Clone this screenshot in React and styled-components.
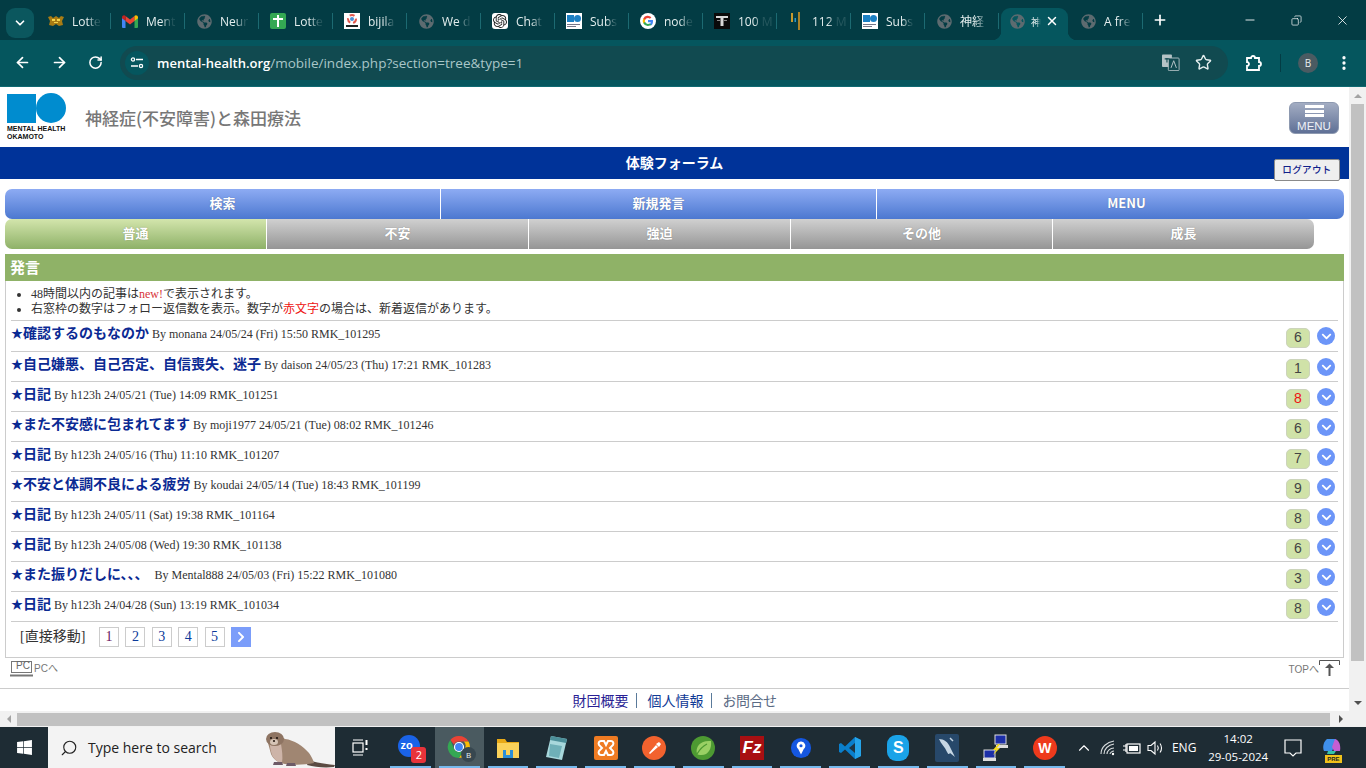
import React from "react";
import styled, { createGlobalStyle } from "styled-components";
import {
  ArrowLeft,
  ArrowRight,
  RotateCw,
  Star,
  Plus,
  X,
  Minus,
  ChevronDown,
  ChevronUp,
  Search,
  EllipsisVertical,
  Copy,
} from "lucide-react";
import { FaGlobeAmericas, FaWindows, FaChevronRight, FaChevronDown } from "react-icons/fa";
import { SiOpenai } from "react-icons/si";

const JP = `"Liberation Serif", "Noto Sans CJK JP", serif`;
const UI = `"Open Sans", "Noto Sans CJK JP", sans-serif`;

const GlobalStyle = createGlobalStyle`
  html, body {
    margin: 0;
    height: 100%;
    overflow: hidden;
    background: #fff;
  }
`;

const posts = [
  { title: "確認するのもなのか", meta: "By monana 24/05/24 (Fri) 15:50 RMK_101295", count: 6 },
  { title: "自己嫌悪、自己否定、自信喪失、迷子", meta: "By daison 24/05/23 (Thu) 17:21 RMK_101283", count: 1 },
  { title: "日記", meta: "By h123h 24/05/21 (Tue) 14:09 RMK_101251", count: 8, fresh: true },
  { title: "また不安感に包まれてます", meta: "By moji1977 24/05/21 (Tue) 08:02 RMK_101246", count: 6 },
  { title: "日記", meta: "By h123h 24/05/16 (Thu) 11:10 RMK_101207", count: 7 },
  { title: "不安と体調不良による疲労", meta: "By koudai 24/05/14 (Tue) 18:43 RMK_101199", count: 9 },
  { title: "日記", meta: "By h123h 24/05/11 (Sat) 19:38 RMK_101164", count: 8 },
  { title: "日記", meta: "By h123h 24/05/08 (Wed) 19:30 RMK_101138", count: 6 },
  { title: "また振りだしに、、、", meta: "By Mental888 24/05/03 (Fri) 15:22 RMK_101080", count: 3, gap: true },
  { title: "日記", meta: "By h123h 24/04/28 (Sun) 13:19 RMK_101034", count: 8 },
];

const GmailIcon = () => (
  <svg width="16" height="13" viewBox="0 0 16 13">
    <path d="M0 2v10a1 1 0 0 0 1 1h2.500V5.500z" fill="#4285f4" />
    <path d="M16 2v10a1 1 0 0 1-1 1h-2.500V5.500z" fill="#34a853" />
    <path d="M3.500 6V1L8 4.600 12.500 1v5L8 9.500z" fill="#ea4335" />
    <path d="M0 2.500C0 .5 2.300-.5 3.500 1v5L0 3.300z" fill="#c5221f" />
    <path d="M16 2.500C16 .5 13.700-.5 12.500 1v5L16 3.300z" fill="#fbbc04" />
  </svg>
);

const GoldIcon = () => (
  <svg width="16" height="12" viewBox="0 0 16 12">
    <path d="M0 2l3-1 2 2 3-2 3 2 2-2 3 1-2 4 1 4-4 1-3-2-3 2-4-1 1-4z" fill="#a97c14" />
    <path d="M4 4h3v2H4zM9 4h3v2H9zM6 7h4v1H6z" fill="#f5d44c" />
  </svg>
);

const CrossIcon = () => (
  <svg width="16" height="16" viewBox="0 0 16 16">
    <rect width="16" height="16" rx="2" fill="#34a853" />
    <path d="M7 2h2v3h4v2H9v7H7V7H3V5h4z" fill="#fff" />
  </svg>
);

const BijliIcon = () => (
  <svg width="16" height="16" viewBox="0 0 16 16">
    <rect width="16" height="16" fill="#fff" />
    <circle cx="8" cy="6" r="4" fill="none" stroke="#e2574c" strokeWidth="2" strokeDasharray="5 3" />
    <circle cx="8" cy="6" r="2" fill="#4a90d9" />
    <rect x="2" y="12" width="12" height="2" fill="#222" />
  </svg>
);

const MiniLogoIcon = () => (
  <svg width="16" height="16" viewBox="0 0 16 16">
    <rect width="16" height="16" fill="#fff" />
    <rect x="1" y="2" width="7" height="7" fill="#1b80c4" />
    <circle cx="11.500" cy="5.500" r="3.500" fill="#1b80c4" />
    <rect x="1" y="11" width="13" height="1" fill="#778" />
    <rect x="1" y="13" width="9" height="1" fill="#778" />
  </svg>
);

const GoogleIcon = () => (
  <svg width="16" height="16" viewBox="0 0 16 16">
    <circle cx="8" cy="8" r="8" fill="#fff" />
    <path d="M13 8.200c0-.4 0-.8-.1-1.200H8v2.200h2.800a2.500 2.500 0 0 1-1 1.600v1.400h1.700c1-.9 1.500-2.300 1.500-4z" fill="#4285f4" />
    <path d="M8 13c1.400 0 2.500-.5 3.400-1.200l-1.600-1.400c-.5.300-1.100.5-1.800.5-1.300 0-2.500-.9-2.900-2.100H3.300v1.400A5 5 0 0 0 8 13z" fill="#34a853" />
    <path d="M5.100 8.800a3 3 0 0 1 0-1.900V5.500H3.300a5 5 0 0 0 0 4.700z" fill="#fbbc04" />
    <path d="M8 5c.8 0 1.400.3 1.900.8l1.500-1.500A5 5 0 0 0 3.300 5.500l1.800 1.400C5.500 5.800 6.700 5 8 5z" fill="#ea4335" />
  </svg>
);

const BlackTIcon = () => (
  <svg width="16" height="16" viewBox="0 0 16 16">
    <rect width="16" height="16" fill="#0a0a0a" />
    <path d="M2 3h12v2H9.500v8h-3V5H2z" fill="#d8d8d8" />
    <path d="M3 7h3v1H3zM10 7h3v1h-3z" fill="#888" />
  </svg>
);

const BarsIcon = () => (
  <svg width="16" height="18" viewBox="0 0 16 18">
    <rect x="3" y="1" width="2" height="9" fill="#c79a2d" />
    <rect x="10" y="0" width="2" height="18" fill="#a9822a" />
    <rect x="6.500" y="6" width="1.500" height="4" fill="#2b98c9" />
  </svg>
);

const ChatIcon = () => (
  <WhiteTile>
    <SiOpenai size={14} color="#222" />
  </WhiteTile>
);

const globe = <FaGlobeAmericas size={15} color="#5d6b70" />;

const tabs = [
  { icon: <GoldIcon />, label: "Lotte" },
  { icon: <GmailIcon />, label: "Ment" },
  { icon: globe, label: "Neur" },
  { icon: <CrossIcon />, label: "Lotte" },
  { icon: <BijliIcon />, label: "bijila" },
  { icon: globe, label: "We d" },
  { icon: <ChatIcon />, label: "Chat" },
  { icon: <MiniLogoIcon />, label: "Subs" },
  { icon: <GoogleIcon />, label: "node" },
  { icon: <BlackTIcon />, label: "100 M" },
  { icon: <BarsIcon />, label: "112 M" },
  { icon: <MiniLogoIcon />, label: "Subs" },
  { icon: globe, label: "神経" },
  { icon: globe, label: "神", active: true },
  { icon: globe, label: "A fre" },
];

const Otter = () => (
  <svg width="70" height="37" viewBox="0 0 70 37">
    <path d="M44 29c8 3 17 4 26 5l-1 2c-10 1-19 0-27-2z" fill="#5b4a42" />
    <path d="M3 12C6 5 14 3 20 8c9 1 18 7 24 14 2 3 4 6 5 10-9 2-20 2-29 1-7-1-12-5-14-10-1-4-2-7-3-11z" fill="#a08672" />
    <path d="M5 14c3 1 8 1 11-1 1 6 2 13 1 19-5-1-8-4-10-8-1-3-2-7-2-10z" fill="#cdb4a8" />
    <ellipse cx="10" cy="8" rx="9" ry="7" fill="#8e7462" />
    <ellipse cx="9" cy="11" rx="4" ry="3" fill="#d6c4b6" />
    <circle cx="6" cy="7" r="1.100" fill="#1d1410" />
    <circle cx="12" cy="7" r="1.100" fill="#1d1410" />
    <circle cx="9" cy="10" r="1.100" fill="#2a1c16" />
    <path d="M9 31h8l1 3H8zM22 32h8l1 3h-10z" fill="#6d5a66" />
  </svg>
);

const ZoomApp = () => (
  <AppStack>
    <svg width="24" height="24" viewBox="0 0 24 24">
      <circle cx="11" cy="11" r="11" fill="#1a63e8" />
    </svg>
    <ZoomLabel>zo</ZoomLabel>
    <CountBadge>2</CountBadge>
  </AppStack>
);

const ChromeApp = () => (
  <AppStack>
    <svg width="24" height="24" viewBox="0 0 24 24">
      <path d="M12 1a11 11 0 0 1 9.500 5.500H12a5.500 5.500 0 0 0-5 3L3.300 5A11 11 0 0 1 12 1z" fill="#ea4335" />
      <path d="M21.500 6.500A11 11 0 0 1 12 23l4.700-8.200a5.500 5.500 0 0 0 .1-8.300z" fill="#fbbc04" />
      <path d="M3.300 5L7.500 14.700a5.500 5.500 0 0 0 9.200.1L12 23A11 11 0 0 1 3.300 5z" fill="#34a853" />
      <circle cx="12" cy="12" r="4.500" fill="#4285f4" stroke="#fff" strokeWidth="1.200" />
    </svg>
    <ChromeBadge>B</ChromeBadge>
  </AppStack>
);

const FolderApp = () => (
  <svg width="24" height="22" viewBox="0 0 24 22">
    <path d="M1 2h8l2 3h12v15H1z" fill="#e8a917" />
    <rect x="1" y="6" width="22" height="15" fill="#fbd25a" />
    <rect x="7" y="13" width="10" height="8" fill="#2b8fd8" />
    <rect x="10" y="13" width="4" height="5" fill="#fbd25a" />
  </svg>
);

const NotepadApp = () => (
  <svg width="26" height="26" viewBox="0 0 26 26">
    <path d="M7 1l16 3-5 21-16-3z" fill="#a8d8dc" />
    <path d="M7 1l16 3-1 4L6 5z" fill="#4c8f99" />
    <path d="M6 9l12 2-3 12-10-2z" fill="#6fb0b8" />
  </svg>
);

const XamppApp = () => (
  <svg width="24" height="24" viewBox="0 0 24 24">
    <rect width="24" height="24" rx="2" fill="#ef7b22" />
    <path d="M7 5h3l2 4 2-4h3c2 0 3 2 2 4l-3 3 3 3c1 2 0 4-2 4h-3l-2-4-2 4H7c-2 0-3-2-2-4l3-3-3-3C4 7 5 5 7 5z" fill="none" stroke="#fff" strokeWidth="2" />
  </svg>
);

const PostmanApp = () => (
  <svg width="24" height="24" viewBox="0 0 24 24">
    <circle cx="12" cy="12" r="12" fill="#f2622e" />
    <path d="M7 17l7-8 2 2-8 7zM14 8l3-2 2 2-2 3z" fill="#fff" />
  </svg>
);

const SpringApp = () => (
  <svg width="24" height="24" viewBox="0 0 24 24">
    <circle cx="12" cy="12" r="12" fill="#4d9a32" />
    <path d="M6 18C4 10 10 4 20 5c1 8-3 15-11 14-1 0-2-.3-3-1z" fill="#9ad064" />
    <path d="M6 18c3-5 6-8 10-10" fill="none" stroke="#4d9a32" strokeWidth="1.300" />
  </svg>
);

const FileZillaApp = () => <FzTile>Fz</FzTile>;

const PinApp = () => (
  <svg width="22" height="24" viewBox="0 0 24 24">
    <circle cx="12" cy="12" r="11" fill="#1557e0" />
    <path d="M12 5a4.500 4.500 0 0 1 3 8l-3 6-3-6a4.500 4.500 0 0 1 3-8z" fill="#fff" />
    <circle cx="12" cy="9.500" r="1.700" fill="#1557e0" />
  </svg>
);

const VsCodeApp = () => (
  <svg width="24" height="24" viewBox="0 0 24 24">
    <path d="M17 1l6 3v16l-6 3L7 13.500 3 17l-2-1V8l2-1 4 3.500z" fill="#0a7fcc" />
    <path d="M17 1l6 3v16l-6 3z" fill="#25a4ea" />
    <path d="M17 7l-6 5 6 5z" fill="#1f2d35" opacity="0.9" />
  </svg>
);

const SkypeApp = () => <SkypeTile>S</SkypeTile>;

const MysqlApp = () => (
  <MysqlTile>
    <svg width="20" height="24" viewBox="0 0 20 24">
      <path d="M2 3c5 0 9 3 11 8l5 10-5-4c-1 2-2 1-3-1C8 11 4 8 2 3z" fill="#c6d6e4" />
      <path d="M13 2l3 3" stroke="#c6d6e4" strokeWidth="1.500" />
    </svg>
  </MysqlTile>
);

const NetworkApp = () => (
  <svg width="26" height="28" viewBox="0 0 26 28">
    <rect x="12" y="1" width="11" height="9" fill="#1c2fa8" stroke="#ddd" />
    <rect x="13" y="11" width="12" height="3" fill="#ddd" />
    <rect x="1" y="16" width="11" height="8" fill="#1c2fa8" stroke="#ddd" />
    <rect x="0" y="24" width="13" height="3" fill="#ddd" />
    <path d="M15 10l-5 6h3l-3 5 7-7h-3l3-4z" fill="#f3d920" />
  </svg>
);

const WpsApp = () => <WpsTile>W</WpsTile>;

const apps = [
  { id: "zoom", node: <ZoomApp /> },
  { id: "chrome", node: <ChromeApp />, active: true },
  { id: "folder", node: <FolderApp /> },
  { id: "notepad", node: <NotepadApp /> },
  { id: "xampp", node: <XamppApp /> },
  { id: "postman", node: <PostmanApp /> },
  { id: "spring", node: <SpringApp /> },
  { id: "filezilla", node: <FileZillaApp /> },
  { id: "pin", node: <PinApp /> },
  { id: "vscode", node: <VsCodeApp /> },
  { id: "skype", node: <SkypeApp /> },
  { id: "mysql", node: <MysqlApp /> },
  { id: "network", node: <NetworkApp /> },
  { id: "wps", node: <WpsApp /> },
];

const App = () => (
  <Window>
    <GlobalStyle />
    <TabStrip>
      <TabSearch>
        <ChevronDown size={14} strokeWidth={3} color="#fff" />
      </TabSearch>
      {tabs.map((tab, i) => (
        <Tab key={i} $active={tab.active}>
          <TabIcon>{tab.icon}</TabIcon>
          <TabLabel $active={tab.active}>{tab.label}</TabLabel>
          {tab.active && <X size={14} strokeWidth={2.5} color="#fff" />}
        </Tab>
      ))}
      <NewTab>
        <Plus size={16} strokeWidth={2.5} color="#fff" />
      </NewTab>
      <WindowControls>
        <WindowButton>
          <Minus size={14} strokeWidth={1.5} color="#fff" />
        </WindowButton>
        <WindowButton>
          <Copy size={11} strokeWidth={1.5} color="#fff" style={{ transform: "scaleX(-1)" }} />
        </WindowButton>
        <WindowButton>
          <X size={15} strokeWidth={1.3} color="#fff" />
        </WindowButton>
      </WindowControls>
    </TabStrip>

    <Toolbar>
      <NavIcons>
        <ArrowLeft size={17} strokeWidth={2.4} color="#fff" />
        <ArrowRight size={17} strokeWidth={2.4} color="#fff" />
        <RotateCw size={15} strokeWidth={2.4} color="#fff" />
      </NavIcons>
      <AddressBar>
        <TuneBadge>
          <svg width="14" height="12" viewBox="0 0 14 12" fill="none" stroke="#fff" strokeWidth="1.300">
            <circle cx="3" cy="2.500" r="1.600" />
            <path d="M6 2.500h7M1 9h7" />
            <circle cx="11" cy="9" r="1.600" />
          </svg>
        </TuneBadge>
        <Url>
          <strong>mental-health.org</strong>/mobile/index.php?section=tree&amp;type=1
        </Url>
        <AddressActions>
          <svg width="18" height="17" viewBox="0 0 20 18">
            <rect x="0" y="0" width="11" height="14" rx="1" fill="#b5c3c6" />
            <rect x="7" y="4" width="12" height="14" rx="1" fill="#114a50" stroke="#b5c3c6" />
            <path d="M3 5h5M5.500 4v5" stroke="#114a50" strokeWidth="1.200" />
            <path d="M10 15l3-8 3 8" stroke="#b5c3c6" strokeWidth="1.100" fill="none" />
          </svg>
          <Star size={17} strokeWidth={2} color="#e4eeee" />
        </AddressActions>
      </AddressBar>
      <ExtensionSlot>
        <svg width="18" height="18" viewBox="0 0 18 18" fill="none" stroke="#fff" strokeWidth="1.800">
          <path d="M2 4h4a2 2 0 0 1 4 0h4v4a2 2 0 0 1 0 4v4H2v-4a2 2 0 0 0 0-4z" />
        </svg>
      </ExtensionSlot>
      <ToolbarDivider />
      <Avatar>B</Avatar>
      <Kebab>
        <EllipsisVertical size={18} strokeWidth={2.4} color="#fff" />
      </Kebab>
    </Toolbar>

    <Viewport>
      <ViewRow>
        <Page>
          <Header>
            <Brand>
              <LogoMarks>
                <LogoSquare />
                <LogoCircle />
              </LogoMarks>
              <LogoText>MENTAL HEALTH</LogoText>
              <LogoText>OKAMOTO</LogoText>
            </Brand>
            <SiteTitle>神経症(不安障害)と森田療法</SiteTitle>
            <MenuButton>
              <MenuBar />
              <MenuBar />
              <MenuBar />
              <MenuCaption>MENU</MenuCaption>
            </MenuButton>
          </Header>

          <BlueBar>
            体験フォーラム
            <Logout>ログアウト</Logout>
          </BlueBar>

          <NavBlock>
            <NavRow>
              <NavCell $tone="blue" $w={436}>検索</NavCell>
              <NavCell $tone="blue" $w={436}>新規発言</NavCell>
              <NavCell $tone="blue" $w={499}>MENU</NavCell>
            </NavRow>
            <NavRow $short>
              <NavCell $tone="green" $w={262}>普通</NavCell>
              <NavCell $tone="gray" $w={262}>不安</NavCell>
              <NavCell $tone="gray" $w={262}>強迫</NavCell>
              <NavCell $tone="gray" $w={262}>その他</NavCell>
              <NavCell $tone="gray" $w={261}>成長</NavCell>
            </NavRow>
          </NavBlock>

          <SectionHead>発言</SectionHead>
          <Panel>
            <Notes>
              <li>
                48時間以内の記事は<NewMark>new!</NewMark>で表示されます。
              </li>
              <li>
                右窓枠の数字はフォロー返信数を表示。数字が<RedMark>赤文字</RedMark>の場合は、新着返信があります。
              </li>
            </Notes>
            {posts.map((post, i) => (
              <PostRow key={i} $first={i === 0}>
                <PostText>
                  <PostTitle>
                    <PostStar>★</PostStar>
                    {post.title}
                  </PostTitle>
                  <PostMeta $gap={post.gap}>{post.meta}</PostMeta>
                </PostText>
                <Count $fresh={post.fresh}>{post.count}</Count>
                <Expand>
                  <FaChevronDown size={11} color="#fff" />
                </Expand>
              </PostRow>
            ))}
            <Pager>
              <PagerLabel>[直接移動]</PagerLabel>
              <PageBox $visited>1</PageBox>
              <PageBox>2</PageBox>
              <PageBox>3</PageBox>
              <PageBox>4</PageBox>
              <PageBox>5</PageBox>
              <PageNext>
                <FaChevronRight size={12} color="#fff" />
              </PageNext>
            </Pager>
          </Panel>

          <SubFooter>
            <PcLink>
              <svg width="24" height="16" viewBox="0 0 24 16" fill="none" stroke="#777">
                <rect x="1.500" y="0.500" width="20" height="11" />
                <path d="M0 14.500h23" strokeWidth="2" />
              </svg>
              <PcCaption>PC</PcCaption>
              PCへ
            </PcLink>
            <TopLink>
              TOPへ
              <svg width="21" height="18" viewBox="0 0 21 18" fill="none" stroke="#555">
                <path d="M.5 5V.5h20V5" />
                <path d="M10.500 16V5" strokeWidth="2" />
                <path d="M6 8l4.500-4.500L15 8z" fill="#555" stroke="none" />
              </svg>
            </TopLink>
          </SubFooter>
          <FooterLinks>
            <FooterLink $color="#2a1f95">財団概要</FooterLink>
            <FooterLink $color="#103a96">個人情報</FooterLink>
            <FooterLink $color="#5b6b85" $last>お問合せ</FooterLink>
          </FooterLinks>
        </Page>
        <VScroll>
          <ScrollButton>
            <ArrowUp />
          </ScrollButton>
          <VThumbTrack>
            <VThumb />
          </VThumbTrack>
          <ScrollButton>
            <ArrowDown />
          </ScrollButton>
        </VScroll>
      </ViewRow>
      <HScroll>
        <HButton>
          <ArrowLeftTri />
        </HButton>
        <HThumb />
        <HButton>
          <ArrowRightTri />
        </HButton>
        <ScrollCorner />
      </HScroll>
    </Viewport>

    <Taskbar>
      <StartButton>
        <FaWindows size={17} color="#fff" />
      </StartButton>
      <SearchBox>
        <Search size={18} strokeWidth={1.5} color="#222" style={{ transform: "scaleX(-1)" }} />
        <SearchText>Type here to search</SearchText>
        <OtterSlot>
          <Otter />
        </OtterSlot>
      </SearchBox>
      <TaskView>
        <svg width="17" height="17" viewBox="0 0 17 17" fill="none" stroke="#fff" strokeWidth="1.200">
          <rect x="1" y="4" width="10" height="9" />
          <path d="M1 1h10M1 16h10" />
          <path d="M14.500 1v5M14.500 9v2" strokeWidth="2" />
        </svg>
      </TaskView>
      <AppList>
        {apps.map((app) => (
          <AppButton key={app.id} $active={app.active}>
            {app.node}
          </AppButton>
        ))}
      </AppList>
      <Tray>
        <TrayIcon>
          <ChevronUp size={18} strokeWidth={1.5} color="#fff" />
        </TrayIcon>
        <TrayIcon>
          <svg width="16" height="16" viewBox="0 0 16 16" fill="none" stroke="#d8dcde" strokeWidth="1.100">
            <path d="M1 14C1 7 7 2 14 1M4 14c0-5 4-9 10-10M7 14c0-3 3-6 7-6M10 14c0-1 2-3 4-3" />
            <circle cx="13" cy="14" r="1.200" fill="#fff" stroke="none" />
          </svg>
        </TrayIcon>
        <TrayIcon>
          <svg width="18" height="14" viewBox="0 0 18 14" fill="none" stroke="#fff" strokeWidth="1.200">
            <rect x="4" y="3" width="13" height="9" />
            <rect x="6" y="5" width="9" height="5" fill="#fff" stroke="none" />
            <path d="M0 5h3M0 9h3M3 3v8" />
          </svg>
        </TrayIcon>
        <TrayIcon>
          <svg width="18" height="16" viewBox="0 0 18 16" fill="none" stroke="#fff" strokeWidth="1.100">
            <path d="M1 5.500h3L8 2v12l-4-3.500H1z" />
            <path d="M10.500 5.500c1 1.500 1 3.500 0 5M13 3.500c2 2.500 2 6.500 0 9" />
          </svg>
        </TrayIcon>
        <Lang>ENG</Lang>
        <Clock>
          <span>14:02</span>
          <span>29-05-2024</span>
        </Clock>
        <NotifyButton>
          <svg width="18" height="18" viewBox="0 0 18 18" fill="none" stroke="#fff" strokeWidth="1.200">
            <path d="M1 1h16v13h-5l-3 3-3-3H1z" />
          </svg>
        </NotifyButton>
        <CopilotSlot>
          <svg width="24" height="24" viewBox="0 0 24 24">
            <path d="M7 3h8l2 3-5 9H4C2 11 4 5 7 3z" fill="#3f8fea" />
            <path d="M15 3c4 1 6 6 5 12h-6l-2-4z" fill="#c55ed2" />
            <path d="M8 15h8l-2 3H7z" fill="#35c2a8" />
          </svg>
          <PreTag>PRE</PreTag>
        </CopilotSlot>
      </Tray>
    </Taskbar>
  </Window>
);

const Window = styled.div`
  display: flex;
  flex-direction: column;
  width: 100%;
  height: 100vh;
  overflow: hidden;
`;

const TabStrip = styled.div`
  display: flex;
  align-items: flex-end;
  flex: 0 0 40px;
  background: #033c44;
  padding-left: 6px;
`;

const TabSearch = styled.div`
  display: flex;
  align-items: center;
  justify-content: center;
  align-self: flex-start;
  flex: 0 0 28px;
  height: 30px;
  margin: 8px 3px 0 0;
  border-radius: 9px;
  background: #0b575e;
`;

const Tab = styled.div`
  position: relative;
  display: flex;
  align-items: center;
  flex: 0 0 ${(p) => (p.$active ? "67px" : "74px")};
  min-width: 0;
  height: 32px;
  padding: ${(p) => (p.$active ? "0 9px 6px 8px" : "0 0 6px 11px")};
  margin: ${(p) => (p.$active ? "0 1px 0 2px" : "0")};
  box-sizing: border-box;
  background: ${(p) => (p.$active ? "#05565e" : "transparent")};
  border-radius: 9px 9px 0 0;

  &::before {
    content: "";
    display: ${(p) => (p.$active ? "block" : "none")};
    position: absolute;
    left: -9px;
    bottom: 0;
    width: 9px;
    height: 9px;
    background: radial-gradient(circle at 0 0, transparent 9px, #05565e 9.5px);
  }

  &::after {
    content: "";
    position: absolute;
    ${(p) =>
      p.$active
        ? `right: -9px;
           bottom: 0;
           width: 9px;
           height: 9px;
           background: radial-gradient(circle at 100% 0, transparent 9px, #05565e 9.5px);`
        : `right: 0;
           top: 5px;
           width: 1px;
           height: 16px;
           background: #1c6a72;`}
  }
`;

const TabIcon = styled.span`
  display: flex;
  align-items: center;
  justify-content: center;
  flex: 0 0 16px;
  height: 18px;
`;

const WhiteTile = styled.span`
  display: flex;
  align-items: center;
  justify-content: center;
  width: 16px;
  height: 16px;
  border-radius: 3px;
  background: #fff;
`;

const TabLabel = styled.span`
  flex: 1;
  min-width: 0;
  margin-left: ${(p) => (p.$active ? "6px" : "8px")};
  white-space: nowrap;
  font: ${(p) => (p.$active ? "10px" : "12px")} ${UI};
  color: #e4eeee;
  margin-right: ${(p) => (p.$active ? "2px" : "4px")};
  mask-image: linear-gradient(to right, #000 45%, rgba(0, 0, 0, 0.15) 72%);
`;

const NewTab = styled.div`
  display: flex;
  align-items: center;
  justify-content: center;
  align-self: flex-start;
  flex: 0 0 32px;
  height: 32px;
  margin: 4px 0 0 1px;
`;

const WindowControls = styled.div`
  display: flex;
  align-self: stretch;
  margin-left: auto;
`;

const WindowButton = styled.div`
  display: flex;
  align-items: center;
  justify-content: center;
  width: 46.5px;
  height: 40px;
`;

const Toolbar = styled.div`
  display: flex;
  align-items: center;
  flex: 0 0 47px;
  box-sizing: border-box;
  height: 47px;
  padding: 0 0 1px 14px;
  background: #05565e;
  border-bottom: 1px solid #0f6a72;
`;

const NavIcons = styled.div`
  display: flex;
  align-items: center;
  gap: 20px;
  width: 106px;
`;

const AddressBar = styled.div`
  display: flex;
  align-items: center;
  width: 1108px;
  height: 34px;
  box-sizing: border-box;
  padding: 0 16px 0 5px;
  border-radius: 17px;
  background: #114a50;
`;

const TuneBadge = styled.div`
  display: flex;
  align-items: center;
  justify-content: center;
  width: 24px;
  height: 24px;
  border-radius: 50%;
  background: #05565e;
`;

const Url = styled.div`
  margin-left: 8px;
  font: 13.5px ${UI};
  color: #a9c6c8;
  white-space: nowrap;

  strong {
    font-size: 13px;
    font-weight: 600;
    color: #fff;
  }
`;

const AddressActions = styled.div`
  display: flex;
  align-items: center;
  gap: 15px;
  margin-left: auto;
`;

const ExtensionSlot = styled.div`
  display: flex;
  justify-content: center;
  width: 52px;
`;

const ToolbarDivider = styled.div`
  width: 1px;
  height: 18px;
  background: #033c44;
`;

const Avatar = styled.div`
  display: flex;
  align-items: center;
  justify-content: center;
  width: 20px;
  height: 20px;
  margin-left: 17px;
  border-radius: 50%;
  background: #4b5b62;
  color: #e8eeee;
  font: 10px ${UI};
`;

const Kebab = styled.div`
  display: flex;
  margin-left: 17px;
`;

const Viewport = styled.div`
  display: flex;
  flex-direction: column;
  flex: 1;
  min-height: 0;
`;

const ViewRow = styled.div`
  display: flex;
  flex: 1;
  min-height: 0;
`;

const Page = styled.main`
  flex: 1;
  min-width: 0;
  overflow: hidden;
  background: #fff;
  font-family: ${JP};
`;

const Header = styled.header`
  display: flex;
  align-items: flex-start;
  height: 60px;
  box-sizing: border-box;
  padding: 6px 10px 0 7px;
`;

const Brand = styled.div`
  display: flex;
  flex-direction: column;
  width: 60px;
`;

const LogoMarks = styled.div`
  display: flex;
  align-items: flex-end;
  height: 30px;
  margin-bottom: 2px;
`;

const LogoSquare = styled.div`
  width: 29px;
  height: 29px;
  background: #008ccf;
`;

const LogoCircle = styled.div`
  width: 30px;
  height: 30px;
  border-radius: 50%;
  background: #008ccf;
`;

const LogoText = styled.div`
  font: bold 7px/7.5px "Liberation Sans", sans-serif;
  color: #111;
  white-space: nowrap;
`;

const SiteTitle = styled.h1`
  margin: 14px 0 0 18px;
  font: 500 17px/22px "Noto Sans CJK JP", sans-serif;
  color: #777;
`;

const MenuButton = styled.div`
  display: flex;
  flex-direction: column;
  align-items: center;
  gap: 1.5px;
  width: 50px;
  height: 32px;
  box-sizing: border-box;
  margin: 9px 0 0 auto;
  padding-top: 2px;
  border-radius: 6px;
  border: 1px solid #8d99b0;
  background: linear-gradient(#a3adc3, #5f7096);
`;

const MenuBar = styled.span`
  flex: 0 0 3px;
  width: 19px;
  background: #fff;
`;

const MenuCaption = styled.span`
  margin-top: 1px;
  font: 11.5px/12px "Liberation Sans", sans-serif;
  color: #eef1f7;
`;

const BlueBar = styled.div`
  position: relative;
  height: 32px;
  background: #003399;
  color: #fff;
  text-align: center;
  font: bold 14px/31px "Noto Sans CJK JP", sans-serif;
`;

const Logout = styled.div`
  position: absolute;
  top: 12px;
  right: 9px;
  width: 66px;
  height: 22px;
  box-sizing: border-box;
  border: 1px solid #8a8a8a;
  border-radius: 2px;
  background: #efefef;
  color: #10208a;
  font: 500 9.5px/19px "Noto Sans CJK JP", sans-serif;
  letter-spacing: 0.4px;
`;

const NavBlock = styled.nav`
  margin: 10px 5px 0;
`;

const toneFill = {
  blue: "linear-gradient(#8dabf3, #4c78d0)",
  green: "linear-gradient(#d3e5ac, #8eb168)",
  gray: "linear-gradient(#d0d0d0, #959595)",
};

const NavRow = styled.div`
  display: flex;
  height: 30px;
  margin-right: ${(p) => (p.$short ? "30px" : "0")};
  border-radius: 7px;
  overflow: hidden;
`;

const NavCell = styled.div`
  flex: 0 0 ${(p) => p.$w}px;
  box-sizing: border-box;
  background: ${(p) => toneFill[p.$tone]};
  color: #fff;
  text-align: center;
  font: bold 13px/28px "Noto Sans CJK JP", sans-serif;
  text-shadow: 0 0 1px rgba(60, 60, 60, 0.5);
  border-right: 1px solid #fff;

  &:last-child {
    border-right: 0;
  }
`;

const SectionHead = styled.h2`
  height: 27px;
  margin: 5px 5px 0;
  padding-left: 5px;
  background: #8fb267;
  color: #fff;
  font: bold 15px/26px "Noto Sans CJK JP", sans-serif;
`;

const Panel = styled.section`
  margin: 0 5px;
  padding: 0 5px;
  border: 1px solid #ccc;
  border-top: 0;
  height: 377px;
  box-sizing: border-box;
`;

const Notes = styled.ul`
  height: 39px;
  box-sizing: border-box;
  margin: 0;
  padding: 6px 0 0 20px;
  font: 12px/15px ${JP};
  color: #333;
`;

const NewMark = styled.span`
  color: #d8343a;
`;

const RedMark = styled.span`
  color: #ee1111;
`;

const PostRow = styled.div`
  display: flex;
  align-items: flex-start;
  height: ${(p) => (p.$first ? "31px" : "30px")};
  box-sizing: border-box;
  border-top: 1px solid #ccc;
`;

const PostText = styled.div`
  flex: 1;
  min-width: 0;
  padding-top: 2px;
  line-height: 19px;
  white-space: nowrap;
`;

const PostTitle = styled.span`
  font: bold 14px/19px ${JP};
  color: #0b2a93;
`;

const PostStar = styled.span`
  font-size: 12px;
`;

const PostMeta = styled.span`
  margin-left: ${(p) => (p.$gap ? "6px" : "3px")};
  font: 12px/19px ${JP};
  color: #333;
`;

const Count = styled.div`
  flex: 0 0 24px;
  height: 20px;
  box-sizing: border-box;
  margin-top: 7px;
  border: 1px solid #ccd4bb;
  border-radius: 5px;
  background: #d0e2a8;
  color: ${(p) => (p.$fresh ? "#ee1111" : "#444")};
  text-align: center;
  font: 14px/17px "Liberation Sans", sans-serif;
`;

const Expand = styled.div`
  display: flex;
  align-items: center;
  justify-content: center;
  flex: 0 0 18px;
  height: 18px;
  margin: 6px 3px 0 7px;
  border-radius: 50%;
  background: #6c95f8;
`;

const Pager = styled.div`
  display: flex;
  align-items: flex-start;
  height: 36px;
  box-sizing: border-box;
  padding: 5px 0 0 9px;
  border-top: 1px solid #ccc;
`;

const PagerLabel = styled.span`
  flex: 0 0 79px;
  font: 14px/20px ${JP};
  color: #333;
`;

const PageBox = styled.span`
  width: 20px;
  height: 20px;
  box-sizing: border-box;
  margin-right: 6.4px;
  border: 1px solid #ccc;
  color: ${(p) => (p.$visited ? "#6a1560" : "#0b3a9a")};
  text-align: center;
  font: 14px/18px ${JP};
`;

const PageNext = styled.span`
  display: flex;
  align-items: center;
  justify-content: center;
  width: 20px;
  height: 20px;
  background: #7b9dfa;
`;

const SubFooter = styled.div`
  display: flex;
  justify-content: space-between;
  align-items: flex-start;
  height: 31px;
  box-sizing: border-box;
  padding: 2px 9px 0 10px;
  border-bottom: 1px solid #ccc;
  font: 10px/16px "Liberation Sans", "Noto Sans CJK JP", sans-serif;
  color: #777;
`;

const PcLink = styled.div`
  position: relative;
  display: flex;
  align-items: flex-end;
  height: 17px;
`;

const PcCaption = styled.span`
  position: absolute;
  left: 6px;
  top: 0;
  font: 10px/11px "Liberation Sans", sans-serif;
  color: #666;
`;

const TopLink = styled.div`
  display: flex;
  align-items: flex-end;
  height: 18px;
`;

const FooterLinks = styled.div`
  display: flex;
  justify-content: center;
  align-items: center;
  height: 23px;
  font: 14px/18px "Noto Sans CJK JP", sans-serif;
`;

const FooterLink = styled.span`
  color: ${(p) => p.$color};
  padding-right: ${(p) => (p.$last ? "0" : "7px")};
  margin-right: ${(p) => (p.$last ? "0" : "11px")};
  line-height: 15px;
  letter-spacing: ${(p) => (p.$last ? "-0.5px" : "0")};
  border-right: ${(p) => (p.$last ? "0" : "1px solid #5a7a9a")};
`;

const VScroll = styled.div`
  display: flex;
  flex-direction: column;
  flex: 0 0 17px;
  background: #f1f1f1;
`;

const ScrollButton = styled.div`
  display: flex;
  align-items: center;
  justify-content: center;
  flex: 0 0 17px;
`;

const ArrowUp = styled.span`
  width: 0;
  height: 0;
  border-left: 4px solid transparent;
  border-right: 4px solid transparent;
  border-bottom: 4px solid #a3a3a3;
`;

const ArrowDown = styled.span`
  width: 0;
  height: 0;
  border-left: 4px solid transparent;
  border-right: 4px solid transparent;
  border-top: 4px solid #505050;
`;

const ArrowLeftTri = styled.span`
  width: 0;
  height: 0;
  border-top: 4px solid transparent;
  border-bottom: 4px solid transparent;
  border-right: 4px solid #a3a3a3;
`;

const ArrowRightTri = styled.span`
  width: 0;
  height: 0;
  border-top: 4px solid transparent;
  border-bottom: 4px solid transparent;
  border-left: 4px solid #505050;
`;

const VThumbTrack = styled.div`
  flex: 1;
  padding: 0 2px;
`;

const VThumb = styled.div`
  height: 557px;
  background: #c1c1c1;
`;

const HScroll = styled.div`
  display: flex;
  align-items: center;
  flex: 0 0 16px;
  background: #f1f1f1;
`;

const HButton = styled.div`
  display: flex;
  align-items: center;
  justify-content: center;
  flex: 0 0 17px;
`;

const HThumb = styled.div`
  flex: 0 0 1313px;
  height: 13px;
  margin-right: 2px;
  background: #c1c1c1;
`;

const ScrollCorner = styled.div`
  flex: 0 0 17px;
  align-self: stretch;
  background: #f1f1f1;
`;

const Taskbar = styled.footer`
  display: flex;
  align-items: stretch;
  flex: 0 0 41px;
  height: 41px;
  background: #1e2c34;
  font-family: ${UI};
`;

const StartButton = styled.div`
  display: flex;
  align-items: center;
  justify-content: center;
  flex: 0 0 48px;
`;

const SearchBox = styled.div`
  display: flex;
  align-items: center;
  flex: 0 0 287px;
  box-sizing: border-box;
  padding-left: 12px;
  background: #f3f3f3;
  overflow: hidden;
`;

const SearchText = styled.span`
  margin-left: 10px;
  font: 14px ${UI};
  color: #222;
`;

const OtterSlot = styled.span`
  display: flex;
  align-self: flex-end;
  margin-left: auto;
`;

const TaskView = styled.div`
  display: flex;
  align-items: center;
  justify-content: center;
  flex: 0 0 51px;
`;

const AppList = styled.div`
  display: flex;
  flex: 0 0 auto;
`;

const AppButton = styled.div`
  position: relative;
  display: flex;
  align-items: center;
  justify-content: center;
  flex: 0 0 48.8px;
  background: ${(p) => (p.$active ? "#4a5a60" : "transparent")};

  &::after {
    content: "";
    position: absolute;
    left: 4px;
    right: 4px;
    bottom: 0;
    height: 2px;
    background: #76b9ed;
  }
`;

const AppStack = styled.div`
  position: relative;
  width: 24px;
  height: 26px;
`;

const ZoomLabel = styled.span`
  position: absolute;
  left: 2px;
  top: 2px;
  color: #fff;
  font: bold 11px/16px "Liberation Sans", sans-serif;
`;

const CountBadge = styled.span`
  position: absolute;
  right: -4px;
  bottom: -2px;
  width: 15px;
  height: 16px;
  border-radius: 3px;
  background: #e8333a;
  color: #fff;
  text-align: center;
  font: 11px/16px ${UI};
`;

const ChromeBadge = styled.span`
  position: absolute;
  right: -5px;
  bottom: -1px;
  width: 15px;
  height: 15px;
  border-radius: 50%;
  background: #37474f;
  color: #e8eeee;
  text-align: center;
  font: 8px/15px ${UI};
`;

const FzTile = styled.div`
  width: 24px;
  height: 24px;
  background: #a80f12;
  color: #fff;
  text-align: center;
  font: italic bold 17px/24px "Liberation Sans", sans-serif;
`;

const SkypeTile = styled.div`
  width: 22px;
  height: 26px;
  border-radius: 9px;
  background: #1aa3e8;
  color: #fff;
  text-align: center;
  font: bold 16px/26px "Liberation Sans", sans-serif;
`;

const MysqlTile = styled.div`
  display: flex;
  align-items: center;
  justify-content: center;
  width: 24px;
  height: 28px;
  border-radius: 2px;
  background: #27486a;
`;

const WpsTile = styled.div`
  width: 24px;
  height: 24px;
  border-radius: 50%;
  background: #ee3a1c;
  color: #fff;
  text-align: center;
  font: bold 14px/24px "Liberation Sans", sans-serif;
`;

const Tray = styled.div`
  display: flex;
  align-items: center;
  flex: 1;
  min-width: 0;
  padding-left: 3px;
  color: #fff;
`;

const TrayIcon = styled.div`
  display: flex;
  align-items: center;
  justify-content: center;
  flex: 0 0 24px;
`;

const Lang = styled.span`
  flex: 0 0 28px;
  margin-left: 2px;
  font: 12px ${UI};
  text-align: center;
`;

const Clock = styled.div`
  display: flex;
  flex-direction: column;
  align-items: center;
  gap: 3px;
  flex: 0 0 62px;
  margin-left: 9px;
  white-space: nowrap;
  font: 11.5px/15px ${UI};
`;

const NotifyButton = styled.div`
  display: flex;
  justify-content: center;
  flex: 0 0 52px;
  margin-left: -2px;
`;

const CopilotSlot = styled.div`
  position: relative;
  display: flex;
  flex: 0 0 24px;
  margin-left: 1px;
`;

const PreTag = styled.span`
  position: absolute;
  left: 5px;
  bottom: -3px;
  padding: 0 2px;
  background: #f1c21b;
  color: #222;
  font: bold 6px/8px "Liberation Sans", sans-serif;
`;

export default App;
